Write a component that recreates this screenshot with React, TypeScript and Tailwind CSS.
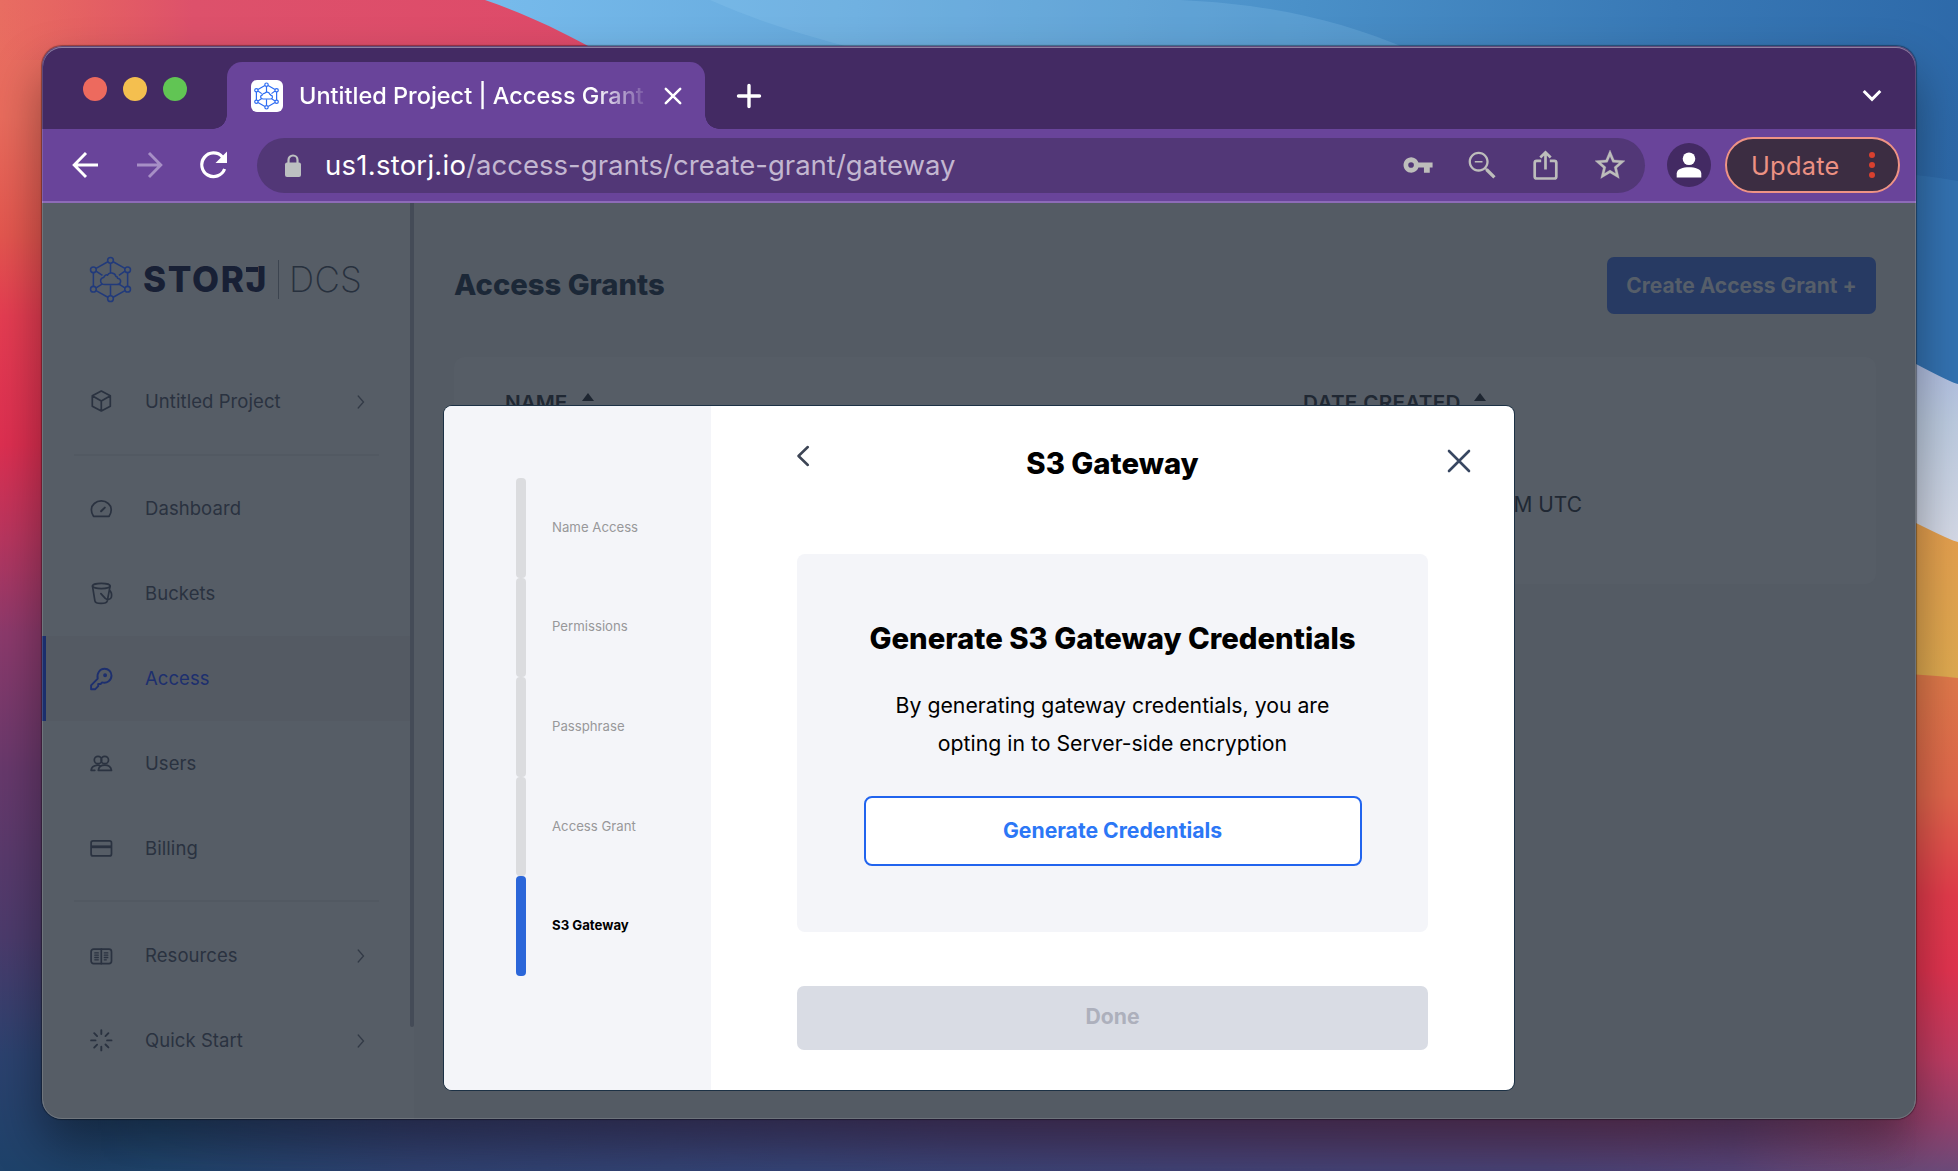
import React from "react";

function Wallpaper() {
  return (
    <svg className="absolute inset-0 h-full w-full" viewBox="0 0 1958 1171" preserveAspectRatio="none" aria-hidden="true">
      <defs>
        <linearGradient id="left" x1="0" y1="0" x2="0" y2="1">
          <stop offset="0" stopColor="#e86d62" />
          <stop offset="0.1" stopColor="#e96c5d" />
          <stop offset="0.2" stopColor="#e4574f" />
          <stop offset="0.27" stopColor="#e53d52" />
          <stop offset="0.38" stopColor="#de2f51" />
          <stop offset="0.46" stopColor="#b8365f" />
          <stop offset="0.54" stopColor="#8d3a6c" />
          <stop offset="0.66" stopColor="#67396c" />
          <stop offset="0.8" stopColor="#4c3b6c" />
          <stop offset="0.9" stopColor="#2c426f" />
          <stop offset="1" stopColor="#1e426a" />
        </linearGradient>
        <linearGradient id="pink" x1="0" y1="0" x2="1" y2="0">
          <stop offset="0" stopColor="#e2525f" stopOpacity="0" />
          <stop offset="0.3" stopColor="#dd516b" />
          <stop offset="1" stopColor="#de4969" />
        </linearGradient>
        <linearGradient id="sky" gradientUnits="userSpaceOnUse" x1="485" y1="0" x2="1958" y2="150">
          <stop offset="0" stopColor="#77bbec" />
          <stop offset="0.25" stopColor="#66a9dc" />
          <stop offset="0.55" stopColor="#4a90c8" />
          <stop offset="0.8" stopColor="#3878b5" />
          <stop offset="1" stopColor="#2d69a9" />
        </linearGradient>
        <linearGradient id="lavender" x1="0" y1="0" x2="0" y2="1">
          <stop offset="0" stopColor="#a9b6e2" />
          <stop offset="0.4" stopColor="#bccbe0" />
          <stop offset="1" stopColor="#d9dce8" />
        </linearGradient>
        <linearGradient id="gold" x1="0" y1="0" x2="0" y2="1">
          <stop offset="0" stopColor="#e69c4e" />
          <stop offset="1" stopColor="#deab50" />
        </linearGradient>
        <linearGradient id="ember" x1="0" y1="0" x2="0" y2="1">
          <stop offset="0" stopColor="#df7a4a" />
          <stop offset="0.25" stopColor="#e0664b" />
          <stop offset="0.45" stopColor="#e23b4b" />
          <stop offset="0.6" stopColor="#e0334f" />
          <stop offset="0.78" stopColor="#bd3c63" />
          <stop offset="0.9" stopColor="#95406c" />
          <stop offset="1" stopColor="#6b4a79" />
        </linearGradient>
        <linearGradient id="dusk" x1="0" y1="0" x2="1" y2="0">
          <stop offset="0" stopColor="#1e426a" stopOpacity="0" />
          <stop offset="0.06" stopColor="#20456d" />
          <stop offset="0.2" stopColor="#304373" />
          <stop offset="0.4" stopColor="#364679" />
          <stop offset="0.6" stopColor="#424478" />
          <stop offset="0.8" stopColor="#4a4478" />
          <stop offset="0.9" stopColor="#56457a" />
          <stop offset="1" stopColor="#6b4a79" stopOpacity="0" />
        </linearGradient>
        <linearGradient id="plum" x1="0" y1="0" x2="1" y2="0">
          <stop offset="0.05" stopColor="#4a3a70" stopOpacity="0" />
          <stop offset="0.5" stopColor="#5a3a70" />
          <stop offset="0.85" stopColor="#803a66" />
          <stop offset="1" stopColor="#953e6a" stopOpacity="0" />
        </linearGradient>
        <linearGradient id="fade" x1="0" y1="0" x2="0" y2="1">
          <stop offset="0" stopColor="#fff" />
          <stop offset="1" stopColor="#000" />
        </linearGradient>
        <mask id="fadeDown">
          <rect y="1090" width="1958" height="81" fill="url(#fade)" />
        </mask>
      </defs>
      <rect width="1000" height="1171" fill="url(#left)" />
      <rect width="640" height="60" fill="url(#pink)" />
      <path d="M485 0C525 14 555 28 590 47L700 130H1600V600H1958V0Z" fill="url(#sky)" />
      <path d="M710 0C760 22 800 34 860 50H1410C1340 20 1270 4 1180 0Z" fill="#9bd0f5" fillOpacity="0.2" />
      <path d="M1800 170Q1900 170 1958 181V560H1800Z" fill="#3b80bd" fillOpacity="0.4" />
      <path d="M1800 330Q1880 345 1916 364T1958 384V560H1800Z" fill="url(#lavender)" />
      <path d="M1800 480Q1870 500 1916 523T1958 541V700H1800Z" fill="url(#gold)" />
      <path d="M1000 670H1800Q1900 672 1958 678V1171H1000Z" fill="url(#ember)" />
      <rect x="42" y="1090" width="1880" height="81" fill="url(#dusk)" />
      <rect y="1090" width="1918" height="81" fill="url(#plum)" mask="url(#fadeDown)" />
    </svg>
  );
}

function StorjMark({ className, stroke = 4.6 }: { className: string; stroke?: number }) {
  const nodes = [
    [241, 182],
    [292, 210],
    [292, 268],
    [241, 296],
    [190, 268],
    [190, 210],
  ];
  return (
    <svg className={className} viewBox="178 169 126 140" fill="none" stroke="currentColor" strokeWidth={stroke} aria-hidden="true">
      {nodes.map(([x, y]) => (
        <circle key={`${x}-${y}`} cx={x} cy={y} r="8.5" />
      ))}
      <path d="M249 186L284 206M292 219V259M284 272L249 292M233 292L198 272M190 259V219M198 206L233 186" />
      <path d="M241 191V220M198 214L217 227M284 214L266 227M241 256V287M198 264L217 252M284 264L265 252" />
      <path
        d="M224 254C208 254 208 235 221 233C222 226 230 224 232 226C236 216 255 218 257 230C261 230 262 233 262 235C275 237 274 254 260 254Z"
        strokeLinejoin="round"
      />
    </svg>
  );
}

const navIcon = "h-[26px] w-[26px] shrink-0";
const stroke = { fill: "none", stroke: "currentColor", strokeWidth: 1.7, strokeLinecap: "round", strokeLinejoin: "round" } as const;

function CubeIcon() {
  return (
    <svg className={navIcon} viewBox="0 0 26 26" {...stroke}>
      <path d="M13.3 2L22.3 6.8V17.2L13.3 22L4.3 17.2V6.8ZM4.6 7L13.3 12L22 7M13.3 12V21.8" />
    </svg>
  );
}
function GaugeIcon() {
  return (
    <svg className={navIcon} viewBox="0 0 26 26" {...stroke}>
      <path d="M5.5 20.3C2.5 16 2.7 10.5 6.3 7.5C10.3 4 16.3 4 20.3 7.5C23.9 10.5 24.1 16 21.1 20.3Z" />
      <path d="M13.1 15.2L16.8 11.6" strokeWidth="2" />
    </svg>
  );
}
function BucketIcon() {
  return (
    <svg className={navIcon} viewBox="0 0 26 26" {...stroke}>
      <ellipse cx="13.3" cy="5" rx="8.8" ry="2.6" />
      <path d="M4.5 5.2L6.9 19.9C7.4 23.3 18.6 23.3 19.3 19.9L22.1 5.2M12.9 12.6L17.3 17.4C19.8 19.3 22.8 18.3 23.4 16.1C23.9 13.8 23.4 11.1 21.5 9.2" />
    </svg>
  );
}
function KeyIcon() {
  return (
    <svg className={navIcon} viewBox="0 0 26 26" {...stroke} strokeWidth={1.9}>
      <path d="M3.1 23.2V19.3L9.7 12.6C8.6 6.8 12.1 2.8 16.6 2.8C20.6 2.8 23.5 5.8 23.5 9.6C23.5 14.5 19.1 17.6 14.1 16.4L12.6 18H10.2V20.2L7.3 23.2Z" />
      <circle cx="17.1" cy="9.2" r="1" fill="currentColor" />
    </svg>
  );
}
function UsersIcon() {
  return (
    <svg className={navIcon} viewBox="0 0 26 26" {...stroke}>
      <circle cx="10" cy="9" r="3.7" />
      <circle cx="16.8" cy="9" r="3.7" />
      <path d="M10.3 19.3C10.8 15.8 13.3 14.2 16.8 14.2C20.3 14.2 22.9 15.8 23.5 19.3ZM6.8 19.3H3.1C3.5 16.2 5.5 14.7 8.3 14.3C9.8 14.1 11.3 14.3 12.3 14.7" />
    </svg>
  );
}
function CardIcon() {
  return (
    <svg className={navIcon} viewBox="0 0 26 26" {...stroke}>
      <rect x="3.1" y="4.9" width="20.4" height="15" rx="2" />
      <path d="M3.3 10.8H23.3" strokeWidth="2.8" strokeLinecap="butt" />
    </svg>
  );
}
function BookIcon() {
  return (
    <svg className={navIcon} viewBox="0 0 26 26" {...stroke}>
      <rect x="3.1" y="6.2" width="20.4" height="14.4" rx="2.5" />
      <path d="M13.3 6.2V20.6" />
      <path d="M6.8 9.9H10.3M6.8 12.2H10.3M6.8 14.5H10.3M6.8 16.8H10.3M16.3 9.9H19.8M16.3 12.2H19.8M16.3 14.5H19.8M16.3 16.8H18.3" strokeWidth="1.3" />
    </svg>
  );
}
function SparkIcon() {
  return (
    <svg className={navIcon} viewBox="0 0 26 26" {...stroke} strokeWidth={1.9}>
      <path d="M13.3 2.2V6M13.3 18.8V22.4M3.1 12.4H7.5M19.1 12.4H23.5M6.2 5.2L9.1 8.1M17.5 16.5L20.4 19.4M6.2 19.6L9.1 16.7M17.5 8.1L20.4 5.2" />
    </svg>
  );
}

function NavItem({ icon, label, arrow, active }: { icon: React.ReactNode; label: string; arrow?: boolean; active?: boolean }) {
  return (
    <div
      className={
        "flex h-[85px] shrink-0 items-center border-l-4 pl-[42px] pr-[44px] text-[18.5px] " +
        (active ? "border-[#1b2e6c] bg-[#545a63] text-[#1d2f6e]" : "border-transparent text-[#2a3240]")
      }
    >
      {icon}
      <span className="ml-[31px] grow pt-px tracking-[0.07px]">{label}</span>
      {arrow && (
        <svg className="h-[16px] w-[10px]" viewBox="0 0 10 16" fill="none" stroke="#323a46" strokeWidth="1.3" strokeLinecap="round">
          <path d="M2.2 2L7.5 8L2.2 14" />
        </svg>
      )}
    </div>
  );
}

function SortArrow({ className }: { className: string }) {
  return (
    <svg className={className} viewBox="0 0 12 8">
      <path d="M6 0L12 8H0Z" fill="#1e2631" />
    </svg>
  );
}

function TabStrip() {
  return (
    <div className="flex h-[83px] shrink-0 items-start bg-[#432a63]">
      <div className="ml-[41.4px] flex h-[86px] items-center gap-4">
        <span className="h-6 w-6 rounded-full bg-[#ed6a5e]" />
        <span className="h-6 w-6 rounded-full bg-[#f4bf4f]" />
        <span className="h-6 w-6 rounded-full bg-[#61c554]" />
      </div>
      <div className="mt-4 ml-[25.6px] flex h-[67px] items-end">
        <span className="h-[14px] w-[14px] bg-[radial-gradient(circle_at_0_0,transparent_13.5px,#69449a_14px)]" />
        <div className="flex h-full w-[478px] items-center rounded-t-[15px] bg-[#69449a] pl-6">
          <span className="flex h-8 w-8 items-center justify-center rounded-[6px] bg-white">
            <StorjMark className="h-[28px] w-[25px] text-[#2f6df2]" stroke={6} />
          </span>
          <span className="ml-[16px] w-[349px] overflow-hidden text-[23.5px] font-[450] whitespace-nowrap text-white [mask-image:linear-gradient(to_right,black_295px,transparent_352px)]">
            Untitled Project | Access Grant
          </span>
          <svg className="ml-[15px] h-5 w-5" viewBox="0 0 20 20" stroke="#fff" strokeWidth="2.5" strokeLinecap="round">
            <path d="M2.8 2.8L17.2 17.2M17.2 2.8L2.8 17.2" />
          </svg>
        </div>
        <span className="h-[14px] w-[14px] bg-[radial-gradient(circle_at_100%_0,transparent_13.5px,#69449a_14px)]" />
      </div>
      <svg className="mt-[37px] ml-[17px] h-[26px] w-[26px]" viewBox="0 0 26 26" stroke="#fff" strokeWidth="3.4" strokeLinecap="round">
        <path d="M13 2.5V23.5M2.5 13H23.5" />
      </svg>
      <svg className="mt-[43px] mr-[34px] ml-auto h-[14px] w-[20px]" viewBox="0 0 20 14" fill="none" stroke="#fff" strokeWidth="3">
        <path d="M1.7 2L10 10.3L18.3 2" />
      </svg>
    </div>
  );
}

function Toolbar() {
  return (
    <div className="flex h-[74px] shrink-0 items-center border-b-2 border-[#8d6bb8] bg-[#69449a] pr-4 pl-[28px]">
      <svg className="h-8 w-8" viewBox="0 0 32 32" fill="none" stroke="#fff" strokeWidth="2.9">
        <path d="M28 16H4.5M16 4L4.2 16L16 28" />
      </svg>
      <svg className="ml-8 h-8 w-8" viewBox="0 0 32 32" fill="none" stroke="#a78fc6" strokeWidth="2.9">
        <path d="M3 16H26.5M15 4L26.8 16L15 28" />
      </svg>
      <svg className="ml-8 h-8 w-8" viewBox="0 0 32 32" fill="none" stroke="#fff" strokeWidth="3.2">
        <path d="M26.6 20A11.8 11.8 0 1 1 24.3 7.8L26 9.5" />
        <path d="M29 2.5V14H17.5Z" fill="#fff" stroke="none" />
      </svg>
      <div className="ml-[27px] flex h-[55px] w-[1388px] items-center rounded-full bg-[#523777] pl-[27px] text-[27.5px] whitespace-nowrap">
        <svg className="mt-[2px] h-6 w-[18px]" viewBox="0 0 18 24">
          <rect x="1" y="8.5" width="16" height="14.5" rx="2" fill="#bcc0c1" />
          <path d="M4.5 9.5V6A4.5 4.5 0 0 1 13.5 6V9.5" fill="none" stroke="#bcc0c1" strokeWidth="2.2" />
        </svg>
        <span className="ml-[23px] pt-[2px] tracking-[0.25px] text-white">us1.storj.io</span>
        <span className="pt-[2px] tracking-[0.02px] text-[#c2b6d0]">/access-grants/create-grant/gateway</span>
        <div className="mr-[17px] ml-auto flex items-center text-[#bdbdbb]">
          <svg className="mr-[29px] h-[34px] w-[34px]" viewBox="0 0 24 24" fill="currentColor">
            <path d="M12.3 10.3A5.4 5.4 0 1 0 12.3 13.7H16.2V17.4H20.3V13.7H22.3V10.3ZM7.1 14A2 2 0 1 1 7.1 10A2 2 0 0 1 7.1 14Z" />
          </svg>
          <svg className="mr-[28px] h-[37px] w-[37px]" viewBox="0 0 24 24" fill="currentColor">
            <path d="M15.5 14h-.79l-.28-.27C15.41 12.59 16 11.11 16 9.5 16 5.91 13.09 3 9.5 3S3 5.91 3 9.5 5.91 16 9.5 16c1.61 0 3.09-.59 4.23-1.57l.27.28v.79l5 4.99L20.49 19l-4.99-5zm-6 .5C6.74 14.5 4.5 12.26 4.5 9.5S6.74 4.5 9.5 4.5s5 2.24 5 5-2.24 5-5 5zM7 9h5v1.1H7z" />
          </svg>
          <svg className="mr-[29px] h-[34px] w-[34px]" viewBox="0 0 34 34" fill="none" stroke="currentColor" strokeWidth="2.7">
            <path d="M12.2 12.8H7.7Q5.7 12.8 5.7 14.8V28.5Q5.7 30.5 7.7 30.5H25.3Q27.3 30.5 27.3 28.5V14.8Q27.3 12.8 25.3 12.8H20.8M16.5 21.5V4.5M11.3 9.5L16.5 4.3L21.7 9.5" />
          </svg>
          <svg className="h-[36px] w-[36px]" viewBox="0 0 24 24" fill="currentColor" stroke="currentColor" strokeWidth="0.2">
            <path d="M22 9.24l-7.19-.62L12 2 9.19 8.63 2 9.24l5.46 4.73L5.82 21 12 17.27 18.18 21l-1.63-7.03L22 9.24zM12 15.4l-3.76 2.27 1-4.28-3.32-2.88 4.38-.38L12 6.1l1.71 4.04 4.38.38-3.32 2.88 1 4.28L12 15.4z" />
          </svg>
        </div>
      </div>
      <div className="ml-[22px] flex h-11 w-11 items-center justify-center rounded-full bg-[#432a63]">
        <svg className="h-[26px] w-[26px]" viewBox="0 0 26 26" fill="#fff">
          <circle cx="13" cy="6.8" r="6.3" />
          <path d="M0.7 25.5V21.5C0.7 17 7 15.3 13 15.3S25.3 17 25.3 21.5V25.5Z" />
        </svg>
      </div>
      <div className="ml-[14px] flex h-[56px] w-[175px] items-center rounded-full border-[2.5px] border-[#ef9385] bg-[#3c2d42] pl-[24px]">
        <span className="pt-[2px] text-[25.3px] tracking-[0.3px] text-[#ec9183]">Update</span>
        <span className="ml-[29px] flex flex-col gap-1">
          <span className="h-[6px] w-[6px] rounded-full bg-[#d9402f]" />
          <span className="h-[6px] w-[6px] rounded-full bg-[#d9402f]" />
          <span className="h-[6px] w-[6px] rounded-full bg-[#d9402f]" />
        </span>
      </div>
    </div>
  );
}

function Sidebar() {
  return (
    <aside className="flex w-[372px] shrink-0 justify-between bg-[#565d66]">
      <div className="flex w-[368px] flex-col">
        <div className="flex h-[156px] items-center pb-[3px] pl-[47px]">
          <StorjMark className="h-[47px] w-[43px] text-[#213a7b]" />
          <span className="relative ml-[11px] text-[35px] font-extrabold tracking-[1.7px] text-[#182035]">
            STORJ
            <span className="absolute top-[14px] right-[10px] h-[5px] w-[12px] bg-[#182035]" />
          </span>
          <span className="ml-[10px] h-[39px] w-px bg-[#3c444f]" />
          <span className="ml-[10px] text-[35px] font-extralight tracking-[0.3px] text-[#27303d]">DCS</span>
        </div>
        <NavItem icon={<CubeIcon />} label="Untitled Project" arrow />
        <div className="mt-[10px] mr-[31px] mb-[10px] ml-8 h-[2px] bg-[#525962]" />
        <NavItem icon={<GaugeIcon />} label="Dashboard" />
        <NavItem icon={<BucketIcon />} label="Buckets" />
        <NavItem icon={<KeyIcon />} label="Access" active />
        <NavItem icon={<UsersIcon />} label="Users" />
        <NavItem icon={<CardIcon />} label="Billing" />
        <div className="mt-[9px] mr-[31px] mb-[11px] ml-8 h-[2px] bg-[#525962]" />
        <NavItem icon={<BookIcon />} label="Resources" arrow />
        <NavItem icon={<SparkIcon />} label="Quick Start" arrow />
      </div>
      <div className="h-[824px] w-1 rounded-b bg-[#444b57]" />
    </aside>
  );
}

function AccessGrants() {
  return (
    <main className="flex grow flex-col bg-[#545b64] pt-[54px] pr-10 pl-10">
      <header className="flex items-center justify-between">
        <h1 className="pb-[2px] text-[29.2px] font-extrabold text-[#1c2837]">Access Grants</h1>
        <button className="h-[57px] w-[269px] rounded-[7px] bg-[#273a63] text-[21px] font-bold text-[#565e69]">Create Access Grant +</button>
      </header>
      <section className="mt-[43px] h-[227px] rounded-[10px] bg-[#565d66] px-[51px] text-[#202833]">
        <div className="flex pt-[34px] text-[20.7px] leading-[24px] font-semibold">
          <div className="flex w-[798px] items-start">
            NAME
            <SortArrow className="mt-[2px] ml-[15px] h-[8px] w-[12px]" />
          </div>
          <div className="flex items-start tracking-[0.28px]">
            DATE CREATED
            <SortArrow className="mt-[2px] ml-[13px] h-[8px] w-[12px]" />
          </div>
        </div>
        <div className="mt-[78px] flex justify-end pr-[243px] text-[20.9px] leading-[24px]">PM UTC</div>
      </section>
    </main>
  );
}

const steps = ["Name Access", "Permissions", "Passphrase", "Access Grant", "S3 Gateway"];

function GatewayModal() {
  return (
    <div className="absolute top-[406px] left-[444px] flex h-[683.5px] w-[1070px] overflow-hidden rounded-[8px] bg-white shadow-[0_0_0_1px_#1c3145]">
      <div className="w-[267px] shrink-0 bg-[#f4f5f9] pt-[72px] pl-[72px]">
        {steps.map((label) => {
          const current = label === "S3 Gateway";
          return (
            <div key={label} className="flex h-[99.6px] items-center">
              <span className={"h-full w-[10px] rounded-[4px] " + (current ? "bg-[#2b66d9]" : "bg-[#dbdcdf]")} />
              <span className={"ml-[26px] text-[13.2px] " + (current ? "font-bold text-black" : "text-[#98989a]")}>{label}</span>
            </div>
          );
        })}
      </div>
      <div className="flex w-[803px] flex-col pl-[86px]">
        <div className="flex h-[148px] items-start">
          <svg className="mt-[38px] h-6 w-[14px]" viewBox="0 0 14 24" fill="none" stroke="#3d4555" strokeWidth="2.5" strokeLinecap="round" strokeLinejoin="round">
            <path d="M10.8 3L1.5 12L10.8 21" />
          </svg>
          <h2 className="mt-[37px] ml-[-14px] w-[631px] text-center text-[29.3px] leading-[42px] font-extrabold text-black">S3 Gateway</h2>
          <svg className="mt-[42px] ml-[18px] h-[26px] w-[26px]" viewBox="0 0 26 26" fill="none" stroke="#384761" strokeWidth="2.6" strokeLinecap="round">
            <path d="M3 3L23 23M23 3L3 23" />
          </svg>
        </div>
        <div className="flex h-[378px] w-[631px] flex-col items-center rounded-[8px] bg-[#f4f5f9] pt-[64px] text-black">
          <h3 className="text-[29.3px] leading-[42px] font-extrabold">Generate S3 Gateway Credentials</h3>
          <p className="mt-[26px] w-[460px] text-center text-[21.25px] leading-[38px]">
            By generating gateway credentials, you are opting in to Server-side encryption
          </p>
          <button className="mt-[34px] h-[70px] w-[498px] rounded-[8px] border-2 border-[#2164ee] bg-white text-[21.2px] font-[650] text-[#2c77f6]">
            Generate Credentials
          </button>
        </div>
        <button className="mt-[54px] h-[64px] w-[631px] rounded-[7px] bg-[#d9dce4] pb-[3px] text-[21.2px] font-bold text-[#adb0bc]">Done</button>
      </div>
    </div>
  );
}

export default function App() {
  return (
    <div className="relative h-[1171px] w-[1958px] overflow-hidden px-[42px] pt-[46px] font-[Inter,sans-serif]">
      <Wallpaper />
      <div className="relative h-[1073px] w-[1874px] rounded-[20px] shadow-[0_0_1px_1px_rgba(0,0,0,0.35),0_26px_50px_rgba(0,0,0,0.4)]">
        <div className="flex h-full flex-col overflow-hidden rounded-[20px]">
          <TabStrip />
          <Toolbar />
          <div className="flex grow">
            <Sidebar />
            <AccessGrants />
          </div>
        </div>
        <div className="pointer-events-none absolute inset-0 rounded-[20px] border border-white/15 shadow-[inset_0_1px_0_rgba(255,255,255,0.4)]" />
      </div>
      <GatewayModal />
    </div>
  );
}
